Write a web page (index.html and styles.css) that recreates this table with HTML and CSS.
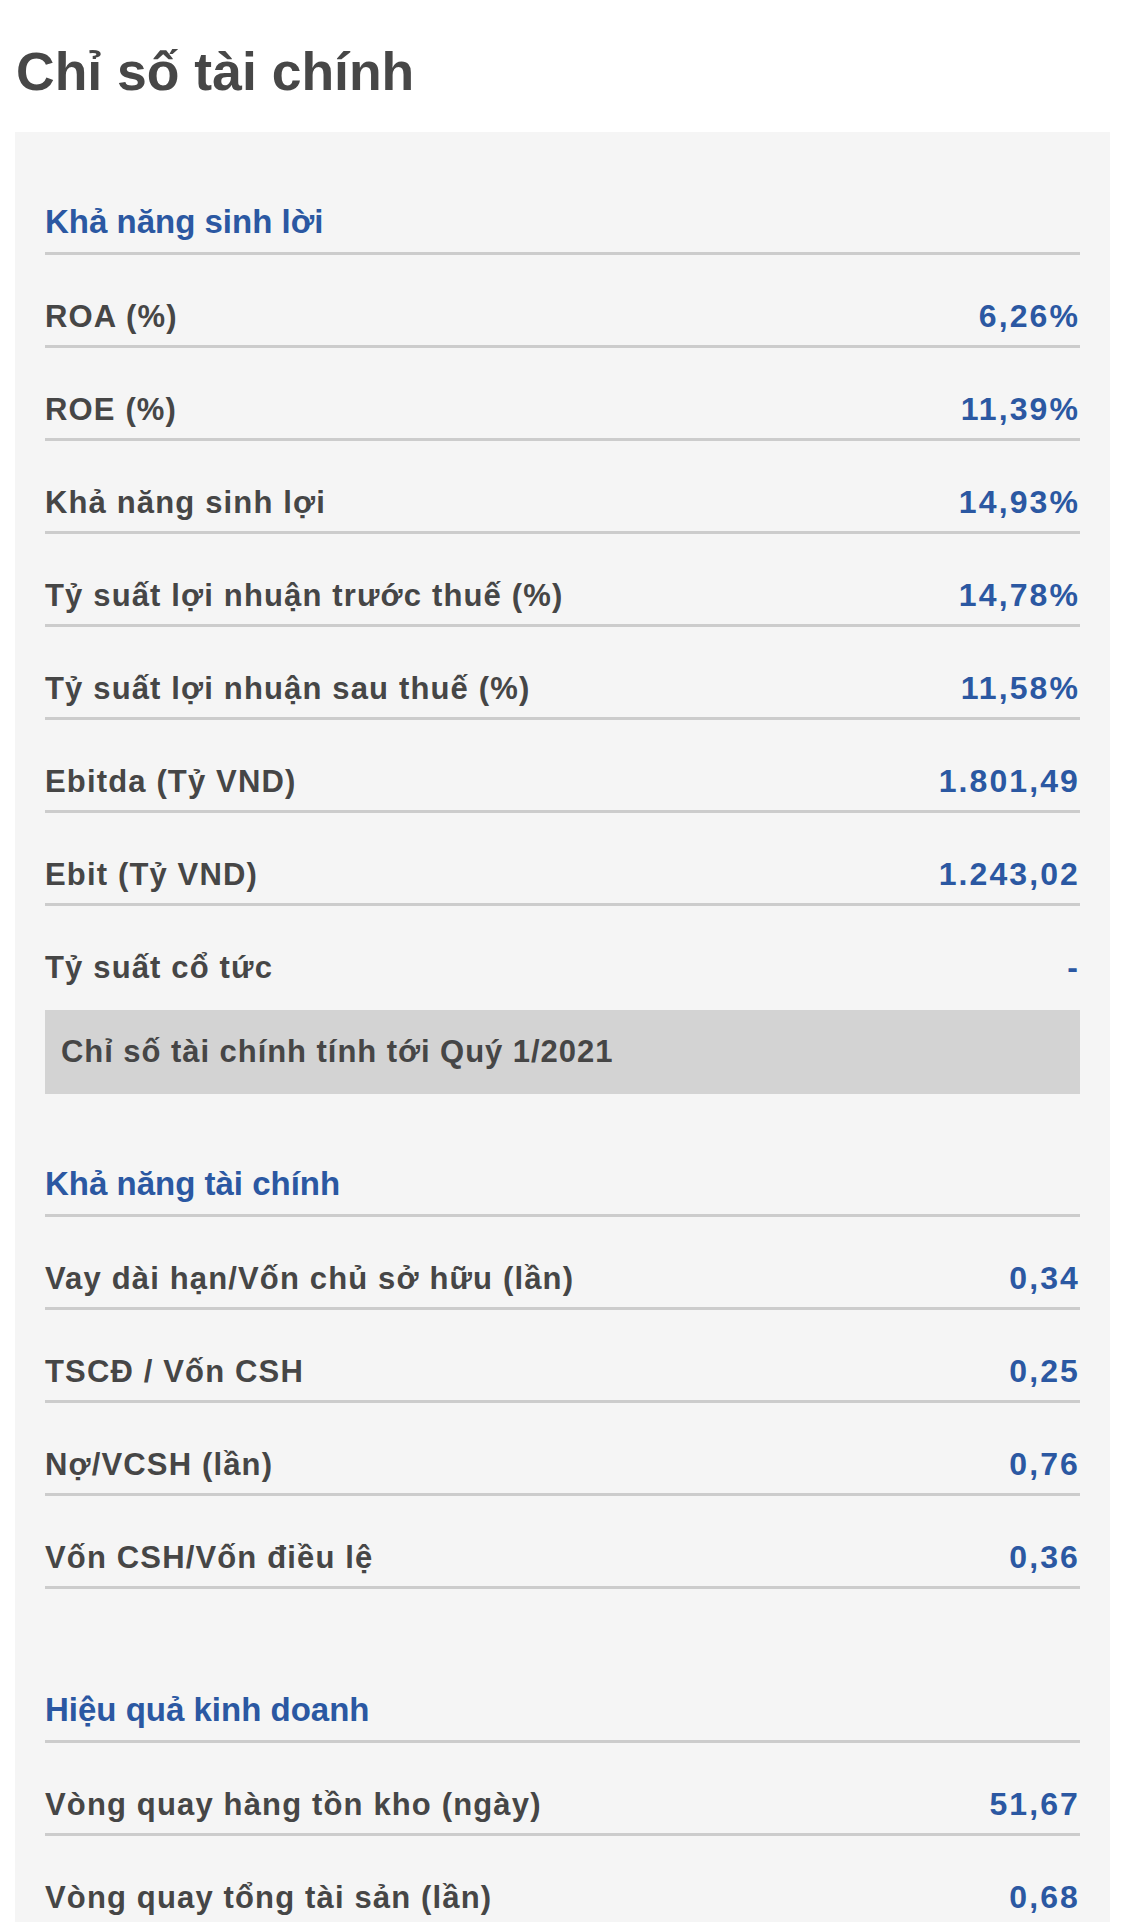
FILE: index.html
```html
<!DOCTYPE html>
<html lang="vi">
<head>
<meta charset="utf-8">
<title>Chỉ số tài chính</title>
<link rel="stylesheet" href="styles.css">
</head>
<body>
<h1 class="page-title">Chỉ số tài chính</h1>
<div class="panel">
  <section class="group">
    <h2 class="group-title">Khả năng sinh lời</h2>
    <div class="row"><span class="label">ROA (%)</span><span class="value">6,26%</span></div>
    <div class="row"><span class="label">ROE (%)</span><span class="value">11,39%</span></div>
    <div class="row"><span class="label">Khả năng sinh lợi</span><span class="value">14,93%</span></div>
    <div class="row"><span class="label">Tỷ suất lợi nhuận trước thuế (%)</span><span class="value">14,78%</span></div>
    <div class="row"><span class="label">Tỷ suất lợi nhuận sau thuế (%)</span><span class="value">11,58%</span></div>
    <div class="row"><span class="label">Ebitda (Tỷ VND)</span><span class="value">1.801,49</span></div>
    <div class="row"><span class="label">Ebit (Tỷ VND)</span><span class="value">1.243,02</span></div>
    <div class="row row--last"><span class="label">Tỷ suất cổ tức</span><span class="value">-</span></div>
    <div class="note">Chỉ số tài chính tính tới Quý 1/2021</div>
  </section>
  <section class="group group--plain">
    <h2 class="group-title">Khả năng tài chính</h2>
    <div class="row"><span class="label">Vay dài hạn/Vốn chủ sở hữu (lần)</span><span class="value">0,34</span></div>
    <div class="row"><span class="label">TSCĐ / Vốn CSH</span><span class="value">0,25</span></div>
    <div class="row"><span class="label">Nợ/VCSH (lần)</span><span class="value">0,76</span></div>
    <div class="row"><span class="label">Vốn CSH/Vốn điều lệ</span><span class="value">0,36</span></div>
  </section>
  <section class="group">
    <h2 class="group-title">Hiệu quả kinh doanh</h2>
    <div class="row"><span class="label">Vòng quay hàng tồn kho (ngày)</span><span class="value">51,67</span></div>
    <div class="row"><span class="label">Vòng quay tổng tài sản (lần)</span><span class="value">0,68</span></div>
  </section>
</div>
</body>
</html>
```

FILE: styles.css
```css
html, body {
  margin: 0;
  padding: 0;
  background: #ffffff;
}

body {
  padding: 0 15px;
  font-family: "Liberation Sans", Arial, Helvetica, sans-serif;
  font-weight: bold;
  color: #444444;
}

.page-title {
  margin: 41px 0 29px 1px;
  font-size: 53.5px;
  line-height: 62px;
  font-weight: bold;
  color: #474747;
}

.panel {
  background: #f5f5f5;
  padding: 0 30px 40px 30px;
}

.group {
  padding-top: 71px;
}

.group--plain {
  padding-bottom: 31px;
}

.group-title {
  margin: 0;
  padding-bottom: 11px;
  font-size: 33px;
  line-height: 38px;
  font-weight: bold;
  color: #2b58a2;
  border-bottom: 3px solid #cccccc;
}

.row {
  display: flex;
  justify-content: space-between;
  align-items: baseline;
  height: 36px;
  padding: 43px 0 11px 0;
  border-bottom: 3px solid #cccccc;
  font-size: 31px;
  line-height: 36px;
}

.row--last {
  border-bottom: 0;
}

.label {
  color: #464646;
  letter-spacing: 1.15px;
}

.value {
  color: #2b58a2;
  font-size: 32px;
  line-height: 36px;
  letter-spacing: 2.1px;
}

.note {
  margin-top: 14px;
  padding: 0 16px;
  height: 84px;
  display: flex;
  align-items: center;
  background: #d3d3d3;
  font-size: 31px;
  color: #464646;
  letter-spacing: 0.95px;
}
```
